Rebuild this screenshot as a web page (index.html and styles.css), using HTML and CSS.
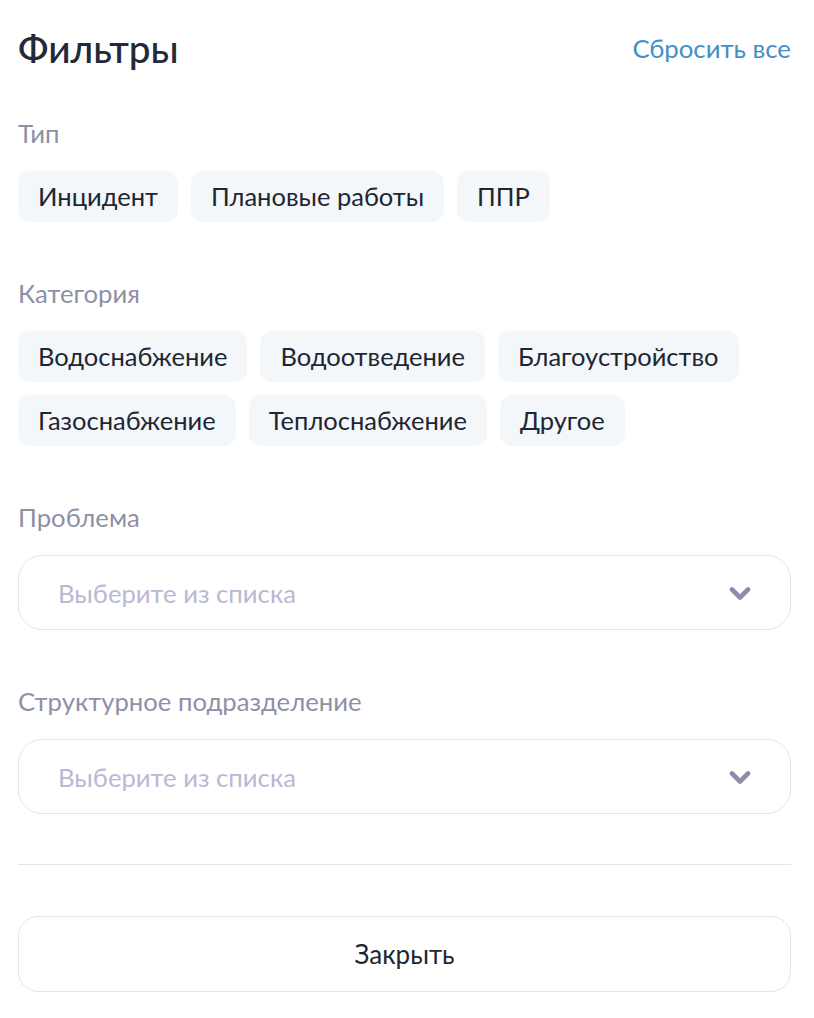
FILE: index.html
```html
<!DOCTYPE html>
<html lang="ru">
<head>
  <meta charset="UTF-8" />
  <title>Фильтры</title>
  <link rel="stylesheet" href="styles.css">
</head>
<body>

  <div class="filters">
    <div class="filters-header">
      <h1 class="filters-title">Фильтры</h1>
      <a href="#" class="reset-link">Сбросить все</a>
    </div>

    <div class="filter-group">
      <div class="group-label">Тип</div>
      <div class="chips">
        <span class="chip">Инцидент</span>
        <span class="chip">Плановые работы</span>
        <span class="chip">ППР</span>
      </div>
    </div>

    <div class="filter-group">
      <div class="group-label">Категория</div>
      <div class="chips">
        <span class="chip">Водоснабжение</span>
        <span class="chip">Водоотведение</span>
        <span class="chip">Благоустройство</span>
        <span class="chip">Газоснабжение</span>
        <span class="chip">Теплоснабжение</span>
        <span class="chip">Другое</span>
      </div>
    </div>

    <div class="filter-group">
      <div class="group-label">Проблема</div>
      <div class="select-box">
        <span class="placeholder">Выберите из списка</span>
        <svg class="chevron" width="22" height="16" viewBox="0 0 22 16">
          <path d="M3 4.5 L11 12.5 L19 4.5" fill="none" stroke="#8e8eaa" stroke-width="4.6" stroke-linecap="round" stroke-linejoin="round"/>
        </svg>
      </div>
    </div>

    <div class="filter-group">
      <div class="group-label">Структурное подразделение</div>
      <div class="select-box">
        <span class="placeholder">Выберите из списка</span>
        <svg class="chevron" width="22" height="16" viewBox="0 0 22 16">
          <path d="M3 4.5 L11 12.5 L19 4.5" fill="none" stroke="#8e8eaa" stroke-width="4.6" stroke-linecap="round" stroke-linejoin="round"/>
        </svg>
      </div>
    </div>

    <hr class="divider">

    <button class="close-btn">Закрыть</button>
  </div>

</body>
</html>
```

FILE: styles.css
```css
* {
  box-sizing: border-box;
}

body {
  margin: 0;
  background: #fff;
  font-family: Lato, "Open Sans", sans-serif;
  color: #1f2633;
}

.filters {
  padding: 28px 23px 0 18px;
}

.filters-header {
  display: flex;
  justify-content: space-between;
  align-items: center;
  height: 40px;
}

.filters-title {
  margin: 0;
  font-size: 38.7px;
  font-weight: 500;
  line-height: 40px;
  color: #222938;
}

.reset-link {
  font-size: 25.8px;
  line-height: 30px;
  color: #418fcb;
  text-decoration: none;
}

.filter-group {
  margin-top: 56px;
}

.filters-header + .filter-group {
  margin-top: 50px;
}

.group-label {
  font-size: 25.7px;
  line-height: 30px;
  color: #8f8fa6;
  margin-bottom: 23px;
}

.chips {
  display: flex;
  flex-wrap: wrap;
  gap: 13px 13px;
}

.chip {
  display: inline-block;
  height: 51px;
  line-height: 51px;
  padding: 0 20px;
  font-size: 25.5px;
  background: #f3f7fa;
  border-radius: 12px;
  color: #1f2633;
}

.select-box {
  display: flex;
  align-items: center;
  justify-content: space-between;
  height: 75px;
  padding: 0 39px;
  border: 1px solid #dde7ee;
  border-radius: 24px;
}

.placeholder {
  font-size: 25.7px;
  color: #b9b9d4;
}

.divider {
  margin: 50px 0 0;
  border: none;
  border-top: 1px solid #dde7ee;
}

.close-btn {
  display: block;
  width: 100%;
  height: 76px;
  margin-top: 51px;
  background: #fff;
  border: 1px solid #dde7ee;
  border-radius: 20px;
  font-family: Lato, "Open Sans", sans-serif;
  font-size: 26px;
  color: #1f2633;
}
```
